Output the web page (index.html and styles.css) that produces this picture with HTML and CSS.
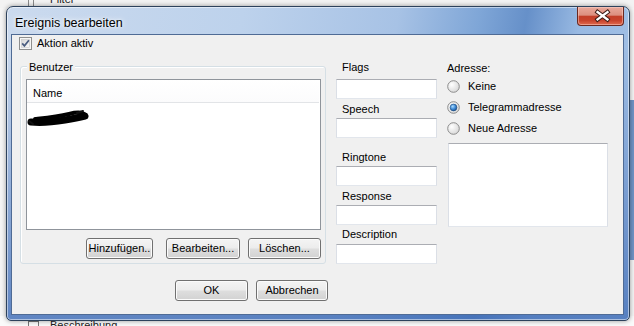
FILE: index.html
```html
<!DOCTYPE html>
<html lang="de">
<head>
<meta charset="utf-8">
<title>Ereignis bearbeiten</title>
<link rel="stylesheet" href="styles.css">
</head>
<body>
<div class="desk">
  <div class="bg-top"><span class="bg-line l1"></span><span class="bg-line l2"></span><span class="bg-text-top">Filter</span></div>
  <div class="bg-bottom"><span class="bg-box"></span><span class="bg-text-bottom">Beschreibung</span></div>
  <div class="bg-right"></div>

  <div class="window">
    <div class="titlebar">
      <span class="title">Ereignis bearbeiten</span>
      <div class="close">
        <svg width="47" height="18" viewBox="0 0 47 18">
          <path d="M19.5 5 L29.5 12.5 M29.5 5 L19.5 12.5" stroke="#3b1c17" stroke-width="4.2" stroke-linecap="square" fill="none"/>
          <path d="M19.5 5 L29.5 12.5 M29.5 5 L19.5 12.5" stroke="#ffffff" stroke-width="2.3" stroke-linecap="square" fill="none"/>
        </svg>
      </div>
    </div>
    <div class="client">
      <div class="check-row">
        <svg class="chk" width="13" height="13" viewBox="0 0 13 13">
          <defs><linearGradient id="cbg" x1="0" y1="0" x2="1" y2="1"><stop offset="0" stop-color="#d6d6d6"/><stop offset="1" stop-color="#fbfbfb"/></linearGradient></defs>
          <rect x="0.5" y="0.5" width="12" height="12" fill="#f6f6f6" stroke="#8e8f8f"/>
          <rect x="2.5" y="2.5" width="8" height="8" fill="url(#cbg)" stroke="#c9c9c9" stroke-width="0.6"/>
          <path d="M3.2 6.4 L5.4 8.9 L9.9 3.3" stroke="#4a5d80" stroke-width="1.7" fill="none"/>
        </svg>
        <span class="check-text">Aktion aktiv</span>
      </div>

      <div class="main">
        <div class="group">
          <span class="group-label">Benutzer</span>
          <div class="list">
            <div class="list-head">Name</div>
            <div class="list-row">
              <svg class="scribble" width="62" height="18" viewBox="0 0 62 18">
                <path d="M4 13 C 14 14, 26 13, 38 11 S 54 8, 58 7" stroke="#000" stroke-width="7" stroke-linecap="round" fill="none"/>
                <path d="M8 10 C 18 9, 30 8, 42 5 S 54 4, 57 5" stroke="#000" stroke-width="4" stroke-linecap="round" fill="none"/>
                <path d="M2 12 L6 15 M50 4 L56 2" stroke="#111" stroke-width="2" stroke-linecap="round" fill="none"/>
              </svg>
            </div>
          </div>
          <div class="group-buttons">
            <button class="btn b-add">Hinzufügen..</button>
            <button class="btn b-edit">Bearbeiten...</button>
            <button class="btn b-del">Löschen...</button>
          </div>
        </div>

        <div class="fields">
          <div class="f-label">Flags</div>
          <div class="tbox mt5"></div>
          <div class="f-label mt4">Speech</div>
          <div class="tbox mt2"></div>
          <div class="f-label mt13">Ringtone</div>
          <div class="tbox mt2"></div>
          <div class="f-label mt4">Response</div>
          <div class="tbox mt2"></div>
          <div class="f-label mt3">Description</div>
          <div class="tbox mt3"></div>
        </div>

        <div class="address">
          <div class="a-label">Adresse:</div>
          <div class="radios">
            <div class="radio-row">
              <svg class="radio" width="13" height="13" viewBox="0 0 13 13">
                <defs><radialGradient id="rg" cx="0.35" cy="0.35" r="0.8"><stop offset="0" stop-color="#ffffff"/><stop offset="1" stop-color="#d2d2d2"/></radialGradient></defs>
                <circle cx="6.5" cy="6.5" r="5.8" fill="url(#rg)" stroke="#8c8c8c"/>
              </svg>
              <span>Keine</span>
            </div>
            <div class="radio-row">
              <svg class="radio" width="13" height="13" viewBox="0 0 13 13">
                <defs>
                  <radialGradient id="rg2" cx="0.35" cy="0.35" r="0.8"><stop offset="0" stop-color="#ffffff"/><stop offset="1" stop-color="#d2d2d2"/></radialGradient>
                  <radialGradient id="rsel" cx="0.38" cy="0.35" r="0.7"><stop offset="0" stop-color="#a9dcff"/><stop offset="0.55" stop-color="#3f8ad6"/><stop offset="1" stop-color="#174f8f"/></radialGradient>
                </defs>
                <circle cx="6.5" cy="6.5" r="5.8" fill="url(#rg2)" stroke="#8c8c8c"/>
                <circle cx="6.5" cy="6.5" r="3.4" fill="url(#rsel)" stroke="#1d4a7c" stroke-width="0.6"/>
              </svg>
              <span>Telegrammadresse</span>
            </div>
            <div class="radio-row">
              <svg class="radio" width="13" height="13" viewBox="0 0 13 13">
                <defs><radialGradient id="rg3" cx="0.35" cy="0.35" r="0.8"><stop offset="0" stop-color="#ffffff"/><stop offset="1" stop-color="#d2d2d2"/></radialGradient></defs>
                <circle cx="6.5" cy="6.5" r="5.8" fill="url(#rg3)" stroke="#8c8c8c"/>
              </svg>
              <span>Neue Adresse</span>
            </div>
          </div>
          <div class="tarea"></div>
        </div>
      </div>

      <div class="dialog-buttons">
        <button class="btn b-ok">OK</button>
        <button class="btn b-cancel">Abbrechen</button>
      </div>
    </div>
  </div>
</div>
</body>
</html>
```

FILE: styles.css
```css
html, body {
  margin: 0;
  padding: 0;
}

body {
  font-family: "Liberation Sans", Arial, sans-serif;
  font-size: 11px;
  color: #000;
}

.desk {
  position: relative;
  width: 634px;
  height: 326px;
  overflow: hidden;
  background: #f5f5f5;
}

/* background window remnants */
.bg-top {
  position: absolute;
  left: 0;
  top: 0;
  width: 634px;
  height: 8px;
  background: #f3f3f3;
}
.bg-line {
  position: absolute;
  top: 0;
  width: 1px;
  height: 8px;
  background: #8a8a8a;
}
.l1 { left: 28px; }
.l2 { left: 33px; }
.bg-text-top {
  position: absolute;
  left: 50px;
  top: -7px;
  font-size: 11px;
  color: #222;
}
.bg-bottom {
  position: absolute;
  left: 0;
  top: 316px;
  width: 634px;
  height: 10px;
  background: #fafafa;
}
.bg-box {
  position: absolute;
  left: 28px;
  top: 5px;
  width: 9px;
  height: 9px;
  border: 1px solid #777;
}
.bg-text-bottom {
  position: absolute;
  left: 50px;
  top: 3px;
  font-size: 11px;
  color: #222;
}
.bg-right {
  position: absolute;
  left: 630px;
  top: 100px;
  width: 4px;
  height: 160px;
  background: #6f94c6;
}

/* window */
.window {
  position: absolute;
  left: 6px;
  top: 6px;
  width: 624px;
  height: 315px;
  box-sizing: border-box;
  border: 1px solid #2d425c;
  border-radius: 7px 7px 5px 5px;
  padding: 0 5px 5px 4px;
  display: flex;
  flex-direction: column;
  background:
    linear-gradient(to bottom, rgba(80, 120, 185, 0) 0px, rgba(80, 120, 185, 0) 40px, rgba(60, 105, 180, 0.75) 100%),
    linear-gradient(100deg, #cbdaee 0%, #bdd2ec 35%, #a7c2e5 58%, #7fa6d7 70%, #6690c9 77%, #98b9e2 85%, #a6c3e6 100%);
  box-shadow: 0 0 5px rgba(0, 0, 0, 0.4), inset 0 0 0 1px rgba(255, 255, 255, 0.5);
}

.titlebar {
  height: 27px;
  flex: none;
  box-sizing: border-box;
  padding: 9px 0 0 4px;
}

.title {
  font-size: 12.5px;
  line-height: 14px;
  color: #000;
  text-shadow: 0 0 6px rgba(255, 255, 255, 0.95), 0 0 3px rgba(255, 255, 255, 0.9);
}

.close {
  position: absolute;
  left: 570px;
  top: 0;
  width: 47px;
  height: 19px;
  box-sizing: border-box;
  border: 1px solid #6a2820;
  border-top: none;
  border-radius: 0 0 4px 4px;
  background: linear-gradient(to bottom, #e9a99b 0%, #dc8f7f 45%, #c33f29 52%, #c8432c 75%, #e06a4f 100%);
  box-shadow: inset 0 0 0 1px rgba(255, 220, 210, 0.45);
}
.close svg {
  display: block;
}

.client {
  flex: 1;
  border: 1px solid #4f6b95;
  background: #f0f0f0;
  display: flex;
  flex-direction: column;
}

/* checkbox row */
.check-row {
  display: flex;
  align-items: center;
  margin: 2px 0 0 7px;
  height: 13px;
}
.chk {
  display: block;
  flex: none;
}
.check-text {
  margin-left: 5px;
  line-height: 13px;
}

/* main row */
.main {
  display: flex;
  align-items: flex-start;
  margin-top: 11px;
}

.group {
  position: relative;
  width: 306px;
  height: 198px;
  box-sizing: border-box;
  margin: 5px 0 0 8px;
  border: 1px solid #d5dfe5;
  border-radius: 3px;
  box-shadow: inset 1px 1px 0 #ffffff;
}
.group-label {
  position: absolute;
  left: 6px;
  top: -6px;
  padding: 0 2px;
  line-height: 13px;
  background: #f0f0f0;
}

.list {
  width: 295px;
  height: 151px;
  box-sizing: border-box;
  margin: 12px 0 0 5px;
  border: 1px solid #8f949b;
  background: #ffffff;
}
.list-head {
  height: 23px;
  box-sizing: border-box;
  padding: 3px 0 0 6px;
  line-height: 20px;
  border-bottom: 1px solid #e2e4e7;
  background: linear-gradient(to bottom, #ffffff, #fbfbfc);
  margin-right: 1px;
}
.list-row {
  margin-top: 6px;
}
.scribble {
  display: block;
}

.group-buttons {
  display: flex;
  margin: 8px 0 0 65px;
}

.btn {
  box-sizing: border-box;
  height: 21px;
  padding: 0;
  margin: 0;
  border: 1px solid #707070;
  border-radius: 3px;
  background: linear-gradient(to bottom, #f4f4f4 0%, #ececec 48%, #dedede 52%, #d2d2d2 100%);
  box-shadow: inset 0 0 0 1px #fbfbfb;
  font-family: "Liberation Sans", Arial, sans-serif;
  font-size: 11px;
  color: #000;
  line-height: 19px;
  text-align: center;
}
.b-add { width: 67px; }
.b-edit { width: 74px; margin-left: 13px; }
.b-del { width: 73px; margin-left: 8px; }

/* middle fields */
.fields {
  width: 101px;
  margin-left: 10px;
}
.f-label {
  padding-left: 6px;
  line-height: 13px;
  height: 13px;
}
.tbox {
  height: 20px;
  box-sizing: border-box;
  background: #ffffff;
  border: 1px solid #e2e6ec;
  border-top-color: #abadb3;
  border-left-color: #dbdfe6;
  border-right-color: #dbdfe6;
}
.mt2 { margin-top: 2px; }
.mt3 { margin-top: 3px; }
.mt4 { margin-top: 4px; }
.mt5 { margin-top: 5px; }
.mt13 { margin-top: 13px; }

/* address */
.address {
  width: 161px;
  margin-left: 10px;
}
.a-label {
  margin-top: 1px;
  line-height: 13px;
}
.radios {
  margin-top: 1px;
}
.radio-row {
  display: flex;
  align-items: center;
  height: 21px;
  line-height: 13px;
}
.radio {
  display: block;
  flex: none;
  margin-right: 8px;
}
.tarea {
  margin: 4px 0 0 1px;
  width: 160px;
  height: 84px;
  box-sizing: border-box;
  background: #ffffff;
  border: 1px solid #e2e6ec;
  border-top-color: #abadb3;
  border-left-color: #dbdfe6;
  border-right-color: #dbdfe6;
}

/* dialog buttons */
.dialog-buttons {
  display: flex;
  margin: 16px 0 0 163px;
}
.b-ok { width: 73px; height: 21px; }
.b-cancel { width: 72px; height: 21px; margin-left: 8px; }
```
